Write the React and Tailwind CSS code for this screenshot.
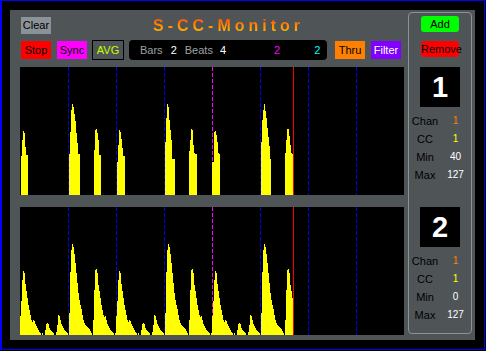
import React from "react";

// chart 1: sharp hits only
const hits = [
  [1, [39, 55, 64, 62, 48, 40, 40]],
  [49, [41, 63, 85, 91, 88, 81, 74, 62, 52, 41, 41]],
  [74, [45, 65, 66, 62, 55, 40, 40]],
  [97, [33, 50, 65, 63, 56, 47, 39, 39]],
  [145, [53, 77, 91, 88, 75, 65, 55, 36, 36, 36]],
  [169, [44, 55, 66, 65, 50, 42, 41, 41]],
  [192, [33, 33, 63, 64, 60, 53, 42, 41]],
  [241, [53, 75, 85, 91, 84, 77, 67, 58, 49, 36]],
  [265, [42, 55, 66, 66, 59, 50, 42, 41]],
];

// chart 2: one 96px period of the averaged envelope
const period = [
  19, 34, 55, 64, 62, 51, 44, 37, 30, 25, 20, 15, 13, 15, 14, 11, 9, 7, 5, 3,
  2, 0, 2, 0, 0, 5, 11, 12, 11, 7, 5, 4, 3, 2, 0, 0, 3, 10, 20, 19,
  15, 11, 9, 7, 5, 4, 3, 2, 0, 22, 63, 85, 91, 88, 81, 72, 62, 52, 42, 35,
  30, 26, 20, 15, 12, 10, 9, 8, 7, 6, 4, 2, 0, 15, 45, 65, 66, 62, 50, 44,
  37, 30, 25, 20, 18, 19, 15, 11, 9, 7, 5, 4, 3, 2, 0, 2,
];

const chart1 = new Array(273).fill(0);
hits.forEach(([start, hs]) => {
  hs.forEach((h, i) => {
    chart1[start + i] = h;
  });
});
const chart2 = Array.from({ length: 273 }, (_, i) => period[i % 96]);

// step outline of the bars, one px per value
const stepPath = (data) => {
  let d = "M0 128";
  data.forEach((h, x) => {
    d += ` L${x} ${128 - h} L${x + 1} ${128 - h}`;
  });
  return d + ` L${data.length} 128 Z`;
};

const Chart = ({ data }) => (
  <div className="w-[384px] h-[128px] bg-black">
    <svg className="block" width="384" height="128" shapeRendering="crispEdges">
      {[48, 96, 144, 240, 288, 336].map((x) => (
        <line key={x} x1={x + 0.5} y1="0" x2={x + 0.5} y2="128" stroke="#0000ff" strokeDasharray="4 2" />
      ))}
      <line x1="192.5" y1="0" x2="192.5" y2="128" stroke="#ff00ff" strokeDasharray="4 2" />
      <path d={stepPath(data)} fill="#ffff00" />
      <line x1="273.5" y1="0" x2="273.5" y2="128" stroke="#ff0000" />
    </svg>
  </div>
);

const Slot = ({ num, chan, cc, min, max }) => (
  <div className="flex flex-col items-center">
    <div className="w-[40px] h-[40px] bg-black flex items-center justify-center text-white font-bold text-[29px] leading-none">
      {num}
    </div>
    <div className="mt-[5px] grid grid-cols-[31px_30px] w-full text-[11px] leading-[18px]">
      <span className="text-center text-black">Chan</span>
      <span className="text-center text-[10px] text-[#ff8000]">{chan}</span>
      <span className="text-center text-black">CC</span>
      <span className="text-center text-[10px] text-[#ffff00]">{cc}</span>
      <span className="text-center text-black">Min</span>
      <span className="text-center text-[10px] text-white">{min}</span>
      <span className="text-center text-black">Max</span>
      <span className="text-center text-[10px] text-white">{max}</span>
    </div>
  </div>
);

const App = () => {
  return (
    <div className="w-[486px] h-[351px] bg-black" style={{ fontFamily: '"Liberation Sans", Arial, sans-serif' }}>
      <div className="w-[485px] h-[350px] border border-l-2 border-[#0000ff] pl-[8px] pt-[9px]">
        <div className="w-[465px] h-[330px] bg-[#4f5457] flex">
          <div className="pl-[10px] pt-[7px] flex flex-col">
            <div className="flex items-center h-[17px]">
              <button className="ml-[1px] w-[30px] h-[17px] bg-[#8b9298] text-black text-[11px] leading-none">
                Clear
              </button>
              <h1 className="ml-[102px] text-[16px] font-bold tracking-[4px] leading-none bg-gradient-to-b from-[#ff4a00] to-[#ffc400] bg-clip-text text-transparent">
                S-CC-Monitor
              </h1>
            </div>
            <div className="mt-[6px] flex items-center h-[20px] text-[11px] leading-none">
              <button className="ml-[1px] w-[30px] h-[18px] bg-[#ff0000] text-black">Stop</button>
              <button className="ml-[6px] w-[30px] h-[18px] bg-[#ff00ff] text-black">Sync</button>
              <button className="ml-[5px] w-[32px] h-[20px] border border-black text-[#c4ff00]">AVG</button>
              <div className="ml-[5px] w-[198px] h-[20px] bg-black rounded-[4px] flex items-center pl-[11px]">
                <span className="text-[#9ea2a5]">Bars</span>
                <span className="ml-[8px] text-white">2</span>
                <span className="ml-[8px] text-[#9ea2a5]">Beats</span>
                <span className="ml-[7px] text-white">4</span>
                <span className="ml-[48px] text-[#ff00ff]">2</span>
                <span className="ml-[34px] text-[#00ffff]">2</span>
              </div>
              <button className="ml-[8px] w-[30px] h-[18px] bg-[#ff8000] text-black">Thru</button>
              <button className="ml-[6px] w-[30px] h-[18px] bg-[#8000ff] text-white">Filter</button>
            </div>
            <div className="mt-[7px]">
              <Chart data={chart1} />
            </div>
            <div className="mt-[12px]">
              <Chart data={chart2} />
            </div>
          </div>
          <div className="ml-[4px] mt-[2px] w-[64px] h-[322px] border border-[#8b9298] rounded-[4px] flex flex-col items-center pt-[3px]">
            <button className="w-[38px] h-[16px] bg-[#00ff00] rounded-[3px] text-black text-[11px] leading-none">
              Add
            </button>
            <button className="mt-[9px] w-[38px] h-[16px] bg-[#ff0000] rounded-[3px] text-black text-[11px] leading-none">
              Remove
            </button>
            <div className="mt-[10px]">
              <Slot num="1" chan="1" cc="1" min="40" max="127" />
            </div>
            <div className="mt-[23px]">
              <Slot num="2" chan="1" cc="1" min="0" max="127" />
            </div>
          </div>
        </div>
      </div>
    </div>
  );
};

export default App;
